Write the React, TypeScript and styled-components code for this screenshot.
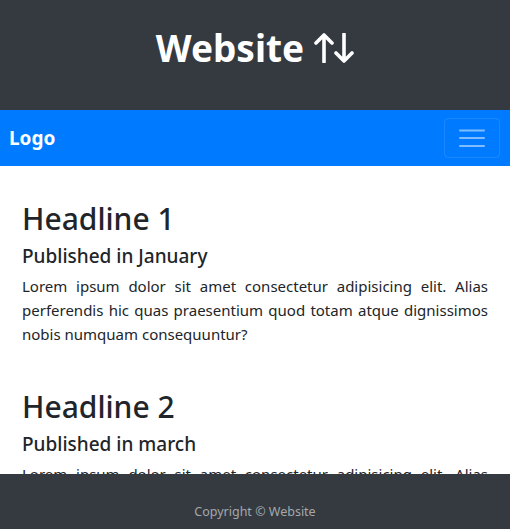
import React from "react";
import styled, { createGlobalStyle } from "styled-components";

const Global = createGlobalStyle`
  html, body { margin: 0; padding: 0; }
  body {
    font-family: "Noto Sans", "Open Sans", sans-serif;
    color: #212529;
    background: #fff;
    overflow: hidden;
  }
  * { box-sizing: border-box; }
`;

const Page = styled.div`
  display: flex;
  flex-direction: column;
  min-height: 529px;
`;

const Header = styled.header`
  background: #343a40;
  height: 110px;
  display: flex;
  align-items: center;
  justify-content: center;
  padding-bottom: 14px;
`;

const Title = styled.h1`
  margin: 0;
  color: #fff;
  font-size: 37px;
  font-weight: 700;
  line-height: 48px;
  display: flex;
  align-items: center;
  gap: 10px;
`;

const Nav = styled.nav`
  background: #007bff;
  height: 56px;
  display: flex;
  align-items: center;
  justify-content: space-between;
  padding: 0 10px 0 9px;
`;

const Brand = styled.a`
  color: #fff;
  font-size: 19px;
  font-weight: 700;
  text-decoration: none;
`;

const Toggler = styled.button`
  width: 56px;
  height: 40px;
  border: 1px solid rgba(255, 255, 255, 0.1);
  border-radius: 4px;
  background: transparent;
  display: flex;
  align-items: center;
  justify-content: center;
  padding: 0;
`;

const Main = styled.main`
  padding: 34px 22px 80px;
`;

const Article = styled.article`
  margin-bottom: 42px;
`;

const Headline = styled.h2`
  margin: 0 0 6px;
  font-size: 30px;
  font-weight: 500;
  line-height: 38px;
`;

const Sub = styled.h5`
  margin: 0 0 6px;
  font-size: 19px;
  font-weight: 500;
  line-height: 24px;
`;

const Text = styled.p`
  margin: 0;
  font-size: 15px;
  line-height: 24px;
  text-align: justify;
`;

const Footer = styled.footer`
  position: fixed;
  left: 0;
  right: 0;
  bottom: 0;
  height: 55px;
  background: #343a40;
  color: #a4a8ac;
  font-size: 12.5px;
  display: flex;
  align-items: center;
  justify-content: center;
  padding-top: 19px;
`;

const Arrows = () => (
  <svg width="40" height="30" viewBox="0 0 40 30" fill="none" stroke="#fff" strokeWidth="3.6" strokeLinecap="round" strokeLinejoin="round">
    <path d="M10 29V2M2 10l8-8 8 8" />
    <path d="M30 1v27M22 20l8 8 8-8" />
  </svg>
);

const Burger = () => (
  <svg width="30" height="30" viewBox="0 0 30 30" stroke="rgba(255,255,255,0.5)" strokeWidth="2" strokeLinecap="round">
    <path d="M3 7.5h24M3 15h24M3 23h24" />
  </svg>
);

const posts = [
  { title: "Headline 1", sub: "Published in January" },
  { title: "Headline 2", sub: "Published in march" },
];

const lorem =
  "Lorem ipsum dolor sit amet consectetur adipisicing elit. Alias perferendis hic quas praesentium quod totam atque dignissimos nobis numquam consequuntur?";

export default function App() {
  return (
    <Page>
      <Global />
      <Header>
        <Title>
          Website <Arrows />
        </Title>
      </Header>
      <Nav>
        <Brand href="#">Logo</Brand>
        <Toggler aria-label="menu">
          <Burger />
        </Toggler>
      </Nav>
      <Main>
        {posts.map((p) => (
          <Article key={p.title}>
            <Headline>{p.title}</Headline>
            <Sub>{p.sub}</Sub>
            <Text>{lorem}</Text>
          </Article>
        ))}
      </Main>
      <Footer>Copyright © Website</Footer>
    </Page>
  );
}
